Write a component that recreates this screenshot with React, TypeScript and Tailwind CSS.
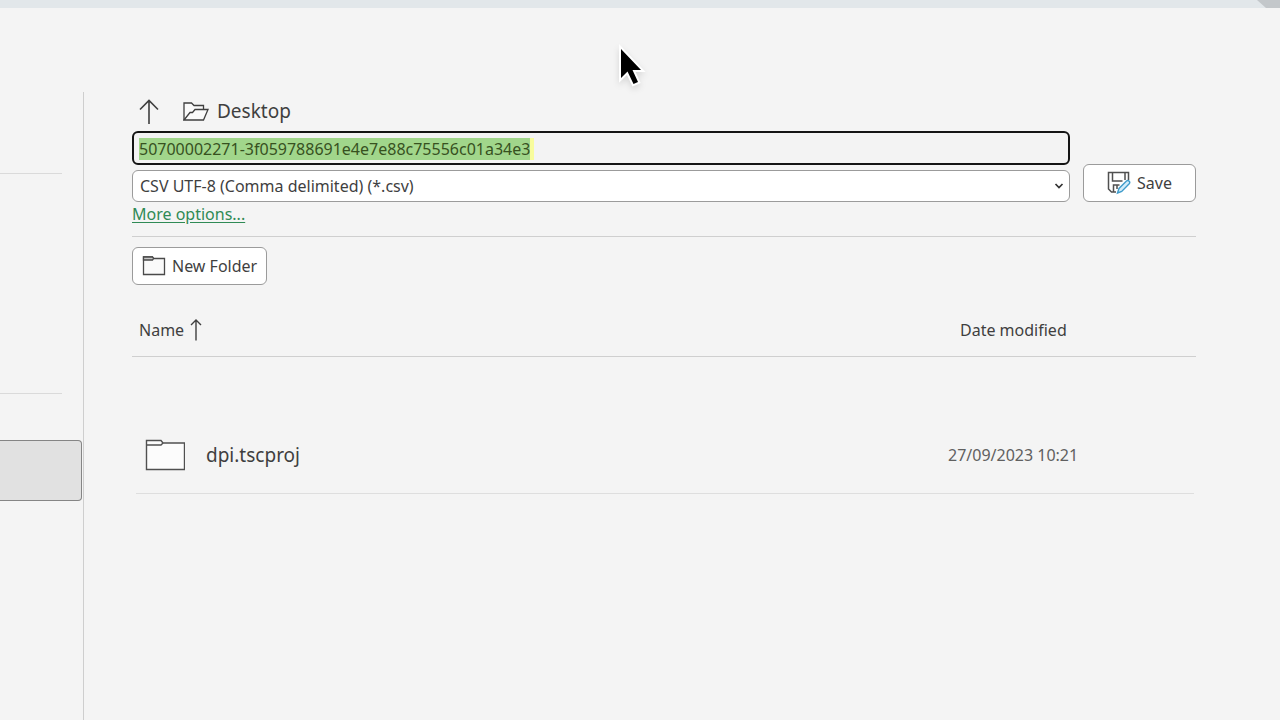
import { useEffect, useRef } from "react";

function ArrowUpIcon() {
  return (
    <svg viewBox="0 0 20 26" className="h-[26px] w-5" fill="none" stroke="currentColor" strokeWidth="1.6" aria-hidden="true">
      <path d="M10 25V1.5M1 10.5L10 1.5L19 10.5" />
    </svg>
  );
}

function SortArrowIcon() {
  return (
    <svg viewBox="0 0 12 22" className="h-[22px] w-3" fill="none" stroke="currentColor" strokeWidth="1.4" aria-hidden="true">
      <path d="M6 21.5V1M1 6L6 1L11 6" />
    </svg>
  );
}

function OpenFolderIcon() {
  return (
    <svg viewBox="0 0 26 20" className="h-5 w-[26px]" fill="none" stroke="currentColor" strokeWidth="1.3" aria-hidden="true">
      <path fill="#fafafa" d="M1 18V1H8.500L11 3.500H20.5V8" />
      <path fill="#fafafa" d="M1 18L7 10.500H9.5L12 7.500H25L20.5 18Z" />
    </svg>
  );
}

function SmallFolderIcon() {
  return (
    <svg viewBox="0 0 24 20" className="h-5 w-6" fill="none" stroke="#4a4a4a" strokeWidth="1.3" aria-hidden="true">
      <path fill="#fafafa" d="M1.5 1H10.5L11.5 2.5H22.5V18.5H1.5Z" />
      <path fill="#c8c8c8" d="M1.5 1H10.5L11.5 2.5L10.5 4H1.5Z" />
    </svg>
  );
}

function FolderIcon() {
  return (
    <svg viewBox="0 0 40 32" className="h-8 w-10" fill="none" stroke="#505050" strokeWidth="1.4" aria-hidden="true">
      <path fill="#fcfcfc" d="M1.500 1.5H16L18 4H39.500V30.5H1.500Z" />
      <path d="M1.500 6H16L18 4" />
    </svg>
  );
}

function SaveIcon() {
  return (
    <svg viewBox="0 0 24 24" className="h-6 w-6" fill="none" strokeWidth="1.5" aria-hidden="true">
      <path stroke="#505050" d="M9 21H4.5L1.5 18V1.5H21.5V9M5.500 1.5V10H15.5M18 1.500V9M6.500 20.500V14H12.500M10 14V18" />
      <path fill="#d3ecfa" stroke="#3f9ccb" strokeWidth="1.4" d="M10.500 22L12 17.500L19.500 10Q21 9 22.200 10.300Q23.300 11.500 22.200 12.800L14.700 20.500Z" />
    </svg>
  );
}

function Pointer() {
  return (
    <svg viewBox="0 0 34 46" className="pointer-events-none absolute top-[42px] left-[616px] h-[46px] w-[34px] drop-shadow-md" aria-hidden="true">
      <path fill="#000" stroke="#fff" strokeWidth="4" paintOrder="stroke" d="M5 7V36L11.500 29.500L17.500 42L22 40L16.500 28H25Z" />
    </svg>
  );
}

function Sidebar() {
  return (
    <nav aria-label="Places" className="w-21 shrink-0 border-r border-[#cecece] pt-[81px]">
      <hr className="mr-[21px] border-[#dadada]" />
      <hr className="mt-[219px] mr-[21px] border-[#dadada]" />
      <button
        type="button"
        aria-label="Current place"
        className="mt-[46px] block h-[61px] w-[82px] rounded-r border border-l-0 border-[#858585] bg-[#e1e1e1]"
      />
    </nav>
  );
}

export default function App() {
  const nameRef = useRef<HTMLInputElement>(null);

  useEffect(() => {
    nameRef.current?.focus();
    nameRef.current?.select();
  }, []);

  return (
    <div className="relative flex min-h-screen flex-col overflow-hidden bg-[#f4f4f4] font-['Noto_Sans','Open_Sans',sans-serif] text-base text-[#3f3f3f]">
      <header className="flex h-2 justify-end bg-[#e2e7ea]">
        <svg viewBox="0 0 24 8" className="h-2 w-6" aria-hidden="true">
          <path fill="#c3c7ca" d="M1 0H24V8H10Z" />
        </svg>
      </header>
      <Pointer />
      <div className="flex flex-1 pt-[84px]">
        <Sidebar />
        <main className="min-w-0 flex-1 pr-21 pl-12">
          <div className="flex h-[39px] items-center gap-6 pl-[7px]">
            <button type="button" aria-label="Up one level">
              <ArrowUpIcon />
            </button>
            <div className="flex items-center gap-2">
              <OpenFolderIcon />
              <span className="text-[19px]">Desktop</span>
            </div>
          </div>

          <form className="flex gap-[13px]" onSubmit={(e) => e.preventDefault()}>
            <div className="min-w-0 flex-1">
              <div className="relative">
                <input
                  ref={nameRef}
                  type="text"
                  aria-label="File name"
                  defaultValue="50700002271-3f059788691e4e7e88c75556c01a34e3"
                  spellCheck={false}
                  className="block h-[34px] w-full rounded-md border-2 border-[#141414] bg-[#f3f3f3] px-[5px] pt-0.5 text-base text-[#37511f] outline-none selection:bg-[#a1d68b] selection:text-[#37511f]"
                />
                <span className="pointer-events-none absolute top-[7px] left-[398px] h-[22px] w-1 bg-[#f8fc9c]" />
              </div>
              <div className="relative mt-[5px]">
                <select
                  aria-label="File type"
                  className="block h-8 w-full appearance-none rounded-md border border-[#9b9b9b] bg-white px-[7px] text-base"
                >
                  <option>CSV UTF-8 (Comma delimited) (*.csv)</option>
                </select>
                <svg viewBox="0 0 10 6" className="pointer-events-none absolute top-[13px] right-[6px] h-[6px] w-[10px]" fill="none" stroke="#333" strokeWidth="1.7" aria-hidden="true">
                  <path d="M1.500 1L5 4.500L8.500 1" />
                </svg>
              </div>
            </div>
            <button
              type="submit"
              className="flex h-[38px] w-[113px] items-center justify-center gap-[6px] self-end rounded-md border border-[#9b9b9b] bg-white"
            >
              <SaveIcon />
              Save
            </button>
          </form>

          <a href="#options" className="block w-fit leading-6 text-[#2f8a55] underline underline-offset-2">
            More options...
          </a>
          <hr className="mt-[10px] border-[#cfcfcf]" />
          <button
            type="button"
            className="mt-[10px] flex h-[38px] items-center gap-[6px] rounded-md border border-[#9b9b9b] bg-white px-[9px]"
          >
            <SmallFolderIcon />
            New Folder
          </button>

          <table className="mt-5 w-full text-left">
            <thead>
              <tr className="h-[51px] border-b border-[#cfcfcf]">
                <th className="pl-[7px] font-normal" aria-sort="ascending">
                  <span className="flex items-center gap-[6px]">
                    Name
                    <SortArrowIcon />
                  </span>
                </th>
                <th className="w-[236px] font-normal">Date modified</th>
              </tr>
            </thead>
          </table>
          <div className="mt-[61px] mr-[2px] ml-1">
            <table className="w-full text-left">
              <tbody>
                <tr className="h-[76px] border-b border-[#dedede]">
                  <td className="pl-[9px]">
                    <span className="flex items-center gap-[21px]">
                      <FolderIcon />
                      <span className="text-[19px]">dpi.tscproj</span>
                    </span>
                  </td>
                  <td className="w-[246px] text-[#606060]">27/09/2023 10:21</td>
                </tr>
              </tbody>
            </table>
          </div>
        </main>
      </div>
    </div>
  );
}
